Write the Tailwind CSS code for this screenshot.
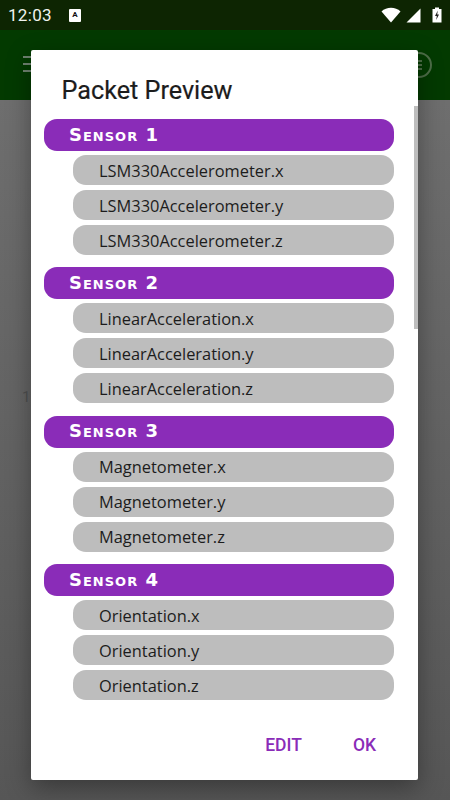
<!DOCTYPE html>
<html>
<head>
<meta charset="utf-8">
<script src="https://cdn.jsdelivr.net/npm/@tailwindcss/browser@4"></script>
</head>
<body class="m-0">
<div class="relative w-[450px] h-[800px] overflow-hidden flex flex-col bg-[#6a6a6a] font-['Roboto',sans-serif]">
  <div class="h-[30px] shrink-0 bg-[#0d2502] flex items-center pl-[8px] pr-[8px] text-[#f0f3ee]">
    <span class="text-[17px] leading-none tracking-[0.3px]">12:03</span>
    <span class="ml-[17px] w-[12px] h-[13px] bg-white rounded-[1px] flex items-center justify-center text-[8px] font-bold text-[#111] leading-none">A</span>
    <div class="ml-auto flex items-center gap-[3px]">
      <svg width="20" height="16" viewBox="0 0 20 16"><path d="M0.5 4.5C5.5 -0.5 14.5 -0.5 19.5 4.5L10 15.5Z" fill="#fff"/></svg>
      <svg width="15" height="15" viewBox="0 0 15 15" class="ml-[2px]"><path d="M14.5 0.5V14.5H0.5Z" fill="#fff"/></svg>
      <svg width="10" height="16" viewBox="0 0 10 16" class="ml-[8px]"><path d="M3 0.5H7V2H9.5V15.5H0.5V2H3Z" fill="#fff"/><path d="M5.8 3.5L3 9H4.8L4.2 13L7 7.5H5.2Z" fill="#222"/></svg>
    </div>
  </div>
  <div class="h-[70px] shrink-0 bg-[#033a00] flex items-center justify-between pl-[23px] pr-[18px]">
    <div class="flex flex-col gap-[5px] -mt-[2px]">
      <div class="w-[16px] h-[2px] bg-[#6f8270]"></div>
      <div class="w-[16px] h-[2px] bg-[#6f8270]"></div>
      <div class="w-[16px] h-[2px] bg-[#6f8270]"></div>
    </div>
    <div class="w-[26px] h-[26px] rounded-full border-2 border-[#4d6d47] flex flex-col items-center justify-center gap-[2px]">
      <div class="w-[5px] h-[2px] bg-[#4d6d47]"></div>
      <div class="w-[5px] h-[2px] bg-[#4d6d47]"></div>
      <div class="w-[5px] h-[2px] bg-[#4d6d47]"></div>
    </div>
  </div>
  <div class="flex-1 bg-gradient-to-b from-[#6e6e6e] to-[#565656] flex">
    <span class="ml-[22px] mt-[290px] h-[15px] text-[15px] leading-none text-[#4f4f4f]">1</span>
  </div>

  <div class="absolute left-[31px] top-[50px] w-[387px] h-[730px] bg-white rounded-[2px] shadow-[0_8px_24px_rgba(0,0,0,0.35)] flex flex-col">
    <div class="absolute right-0 top-[56px] w-[4px] h-[223px] bg-[#bdbdbd]"></div>
    <h2 class="h-[69px] pl-[30.5px] pt-[24.5px] text-[25.2px] leading-[32px] text-[#1c1c1c] font-normal [-webkit-text-stroke:0.2px_#1c1c1c]">Packet Preview</h2>
    <div class="pl-[13px] w-[363px] flex flex-col gap-[12.4px] font-['Open_Sans',sans-serif]">

      <div class="flex flex-col gap-[5px]">
        <div class="h-[32px] -mb-[1px] pb-[2px] rounded-[13px] bg-[#8a2cb8] text-white pl-[25px] flex items-center font-['DejaVu_Sans',sans-serif] font-bold [font-variant:small-caps] text-[18px] tracking-[1px]">Sensor 1</div>
        <div class="ml-[29px] h-[30px] rounded-[13px] bg-[#bdbdbd] pl-[26px] pt-[2px] flex items-center text-[16.4px] text-[#1c1c1c]">LSM330Accelerometer.x</div>
        <div class="ml-[29px] h-[30px] rounded-[13px] bg-[#bdbdbd] pl-[26px] pt-[2px] flex items-center text-[16.4px] text-[#1c1c1c]">LSM330Accelerometer.y</div>
        <div class="ml-[29px] h-[30px] rounded-[13px] bg-[#bdbdbd] pl-[26px] pt-[2px] flex items-center text-[16.4px] text-[#1c1c1c]">LSM330Accelerometer.z</div>
      </div>

      <div class="flex flex-col gap-[5px]">
        <div class="h-[32px] -mb-[1px] pb-[2px] rounded-[13px] bg-[#8a2cb8] text-white pl-[25px] flex items-center font-['DejaVu_Sans',sans-serif] font-bold [font-variant:small-caps] text-[18px] tracking-[1px]">Sensor 2</div>
        <div class="ml-[29px] h-[30px] rounded-[13px] bg-[#bdbdbd] pl-[26px] pt-[2px] flex items-center text-[16.4px] text-[#1c1c1c]">LinearAcceleration.x</div>
        <div class="ml-[29px] h-[30px] rounded-[13px] bg-[#bdbdbd] pl-[26px] pt-[2px] flex items-center text-[16.4px] text-[#1c1c1c]">LinearAcceleration.y</div>
        <div class="ml-[29px] h-[30px] rounded-[13px] bg-[#bdbdbd] pl-[26px] pt-[2px] flex items-center text-[16.4px] text-[#1c1c1c]">LinearAcceleration.z</div>
      </div>

      <div class="flex flex-col gap-[5px]">
        <div class="h-[32px] -mb-[1px] pb-[2px] rounded-[13px] bg-[#8a2cb8] text-white pl-[25px] flex items-center font-['DejaVu_Sans',sans-serif] font-bold [font-variant:small-caps] text-[18px] tracking-[1px]">Sensor 3</div>
        <div class="ml-[29px] h-[30px] rounded-[13px] bg-[#bdbdbd] pl-[26px] pt-[2px] flex items-center text-[16.4px] text-[#1c1c1c]">Magnetometer.x</div>
        <div class="ml-[29px] h-[30px] rounded-[13px] bg-[#bdbdbd] pl-[26px] pt-[2px] flex items-center text-[16.4px] text-[#1c1c1c]">Magnetometer.y</div>
        <div class="ml-[29px] h-[30px] rounded-[13px] bg-[#bdbdbd] pl-[26px] pt-[2px] flex items-center text-[16.4px] text-[#1c1c1c]">Magnetometer.z</div>
      </div>

      <div class="flex flex-col gap-[5px]">
        <div class="h-[32px] -mb-[1px] pb-[2px] rounded-[13px] bg-[#8a2cb8] text-white pl-[25px] flex items-center font-['DejaVu_Sans',sans-serif] font-bold [font-variant:small-caps] text-[18px] tracking-[1px]">Sensor 4</div>
        <div class="ml-[29px] h-[30px] rounded-[13px] bg-[#bdbdbd] pl-[26px] pt-[2px] flex items-center text-[16.4px] text-[#1c1c1c]">Orientation.x</div>
        <div class="ml-[29px] h-[30px] rounded-[13px] bg-[#bdbdbd] pl-[26px] pt-[2px] flex items-center text-[16.4px] text-[#1c1c1c]">Orientation.y</div>
        <div class="ml-[29px] h-[30px] rounded-[13px] bg-[#bdbdbd] pl-[26px] pt-[2px] flex items-center text-[16.4px] text-[#1c1c1c]">Orientation.z</div>
      </div>
    </div>
    <div class="mt-auto h-[70px] flex justify-end items-start pr-[42px] gap-[51px] pt-[25px] text-[17.5px] font-medium text-[#8a2cb8] leading-[20px]">
      <span>EDIT</span>
      <span>OK</span>
    </div>
  </div>
</div>
</body>
</html>
